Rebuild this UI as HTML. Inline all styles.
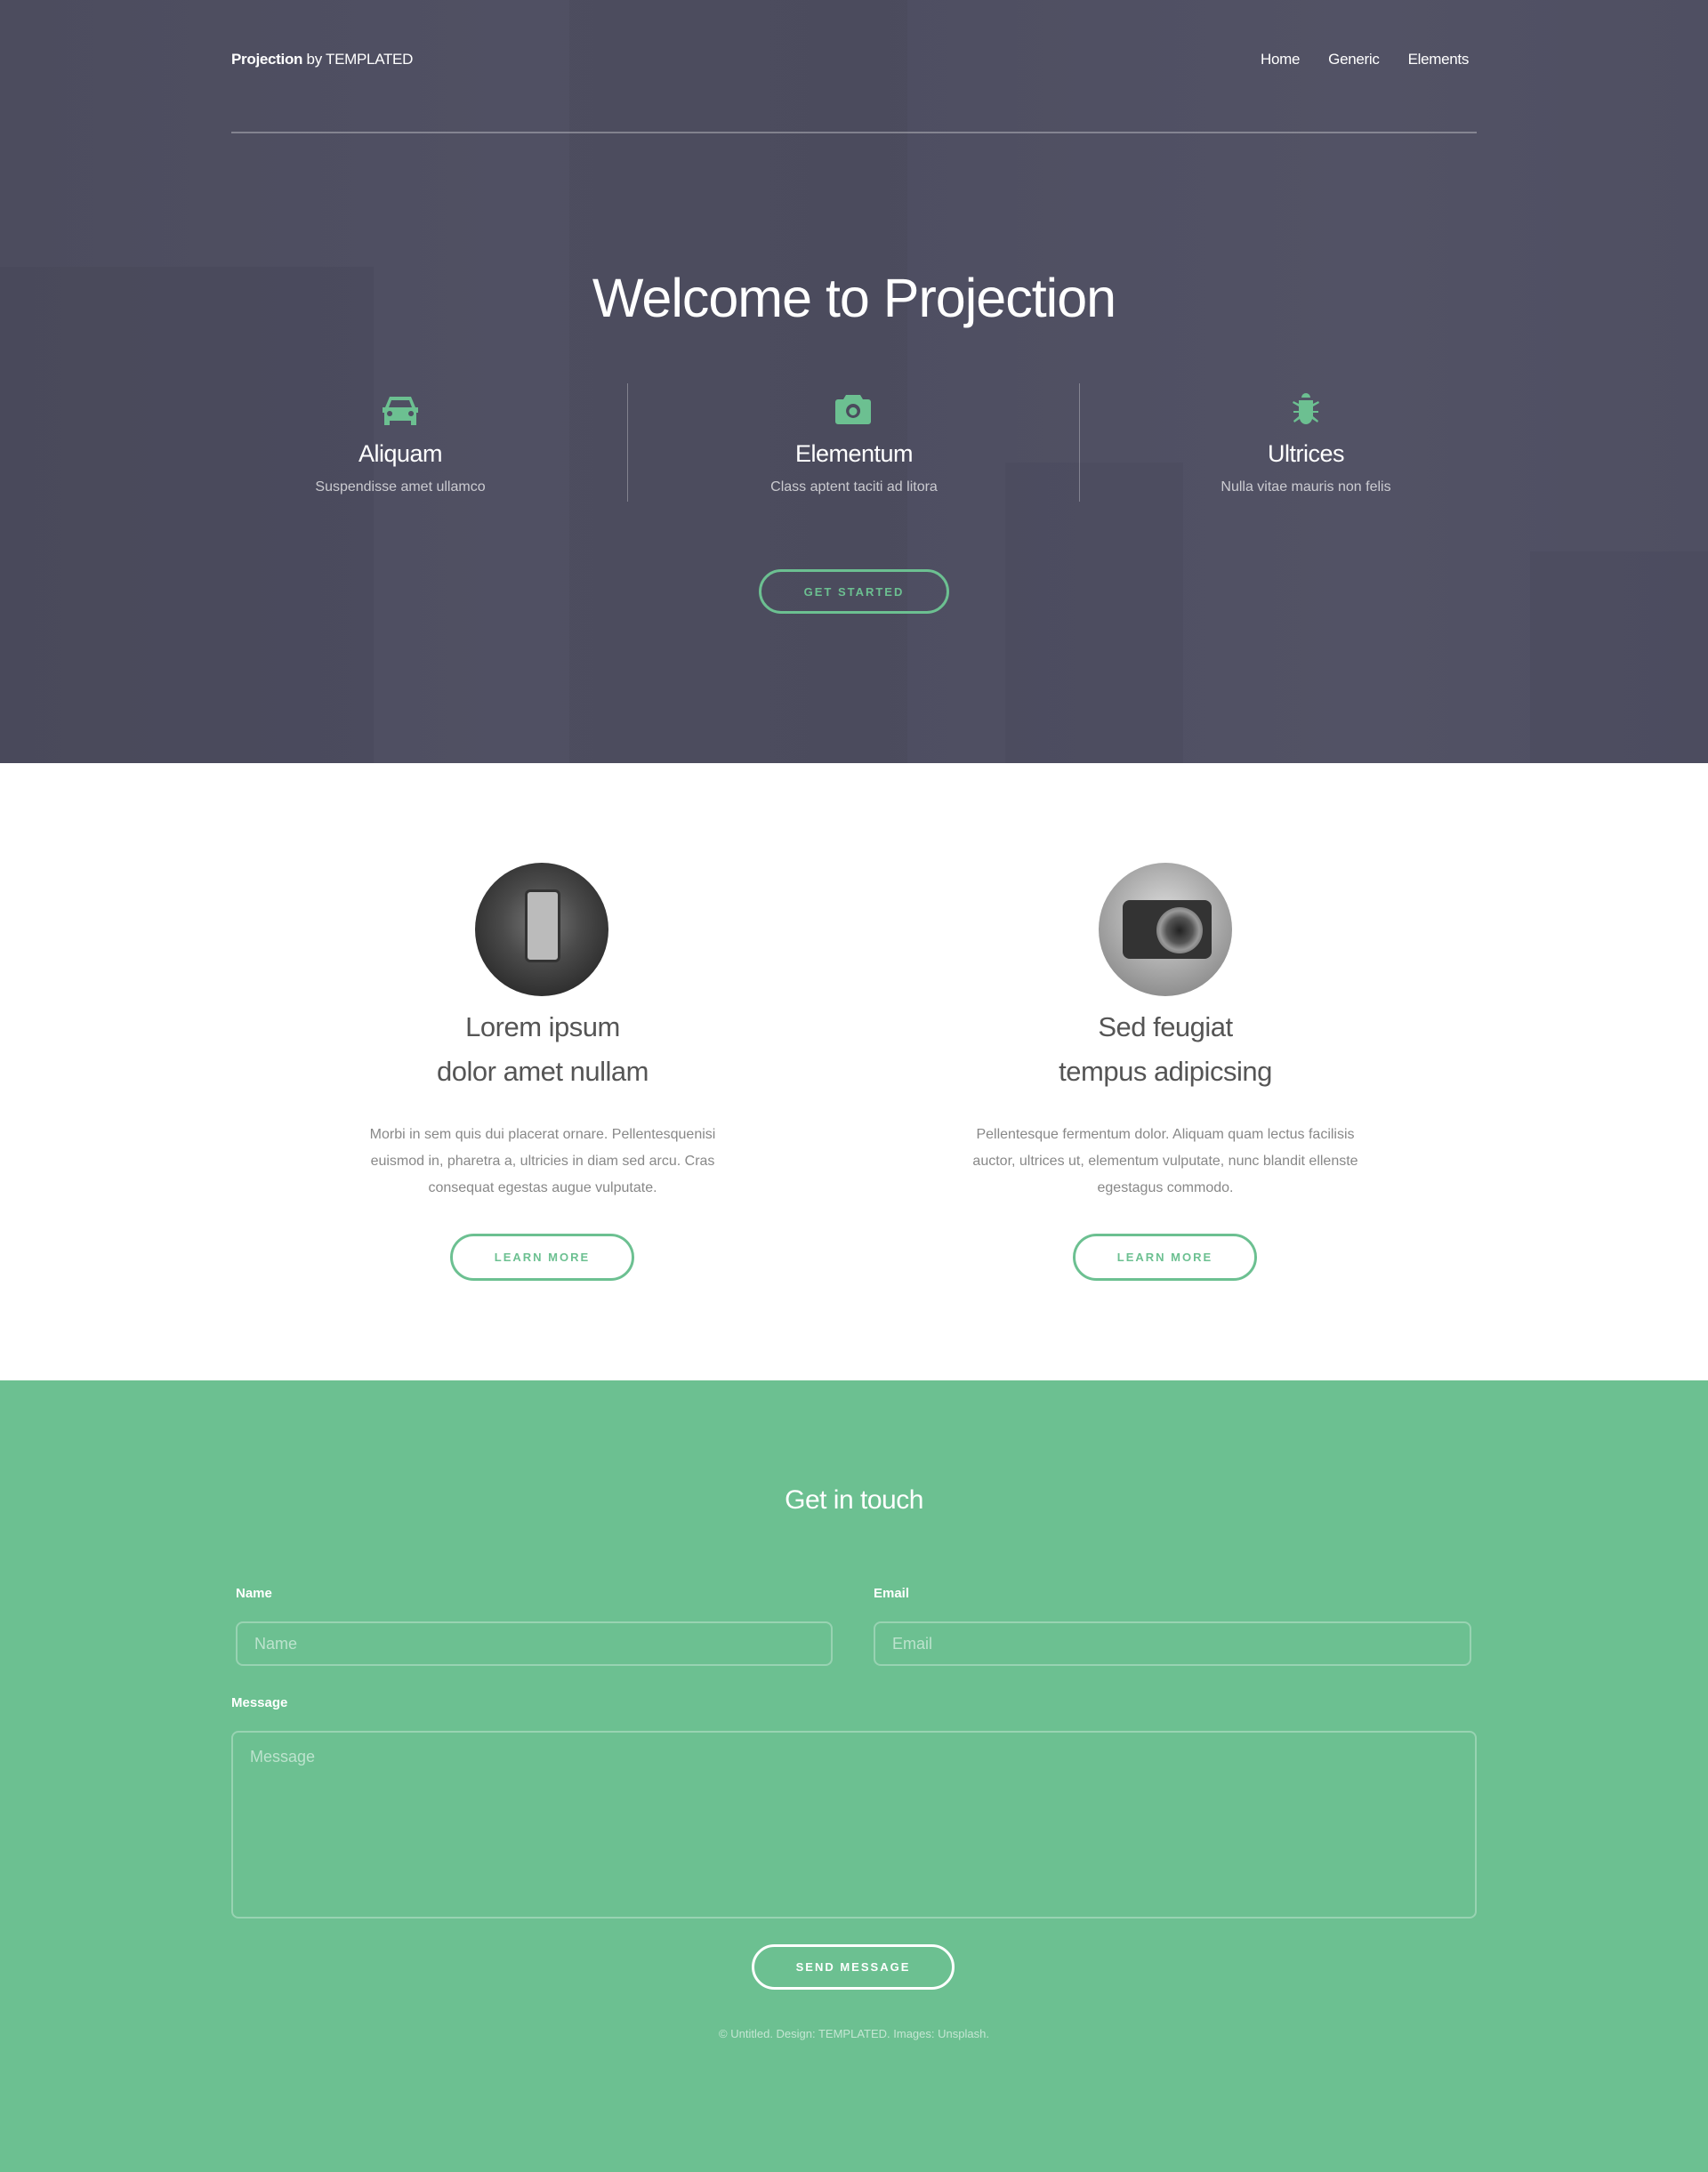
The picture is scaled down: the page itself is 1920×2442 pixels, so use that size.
<!DOCTYPE html>
<html><head><meta charset="utf-8"><style>
*{margin:0;padding:0;box-sizing:border-box}
body{width:1920px;height:2442px;position:relative;font-family:"Liberation Sans",sans-serif;background:#fff;overflow:hidden}
.a{position:absolute}
.c{text-align:center}
#hero{left:0;top:0;width:1920px;height:858px;background:linear-gradient(90deg,#4c4c5e 0%,#505063 30%,#4e4e61 50%,#525265 80%,#4f4f62 100%)}
.bld{position:absolute}
.btn{position:absolute;border:3px solid #6cc091;border-radius:30px;color:#6cc091;font-size:13px;letter-spacing:2px;font-weight:bold;display:flex;align-items:center;justify-content:center}
.inp{position:absolute;border:2px solid rgba(255,255,255,.3);border-radius:8px;color:rgba(255,255,255,.55);font-size:18px;padding-left:19px;display:flex;align-items:center}
.lbl{position:absolute;color:#fff;font-weight:bold;font-size:15px}
</style></head><body>
<div id="hero" class="a">
 <div class="bld" style="left:0;top:300px;width:420px;height:558px;background:rgba(60,60,75,.18)"></div>
 <div class="bld" style="left:640px;top:0;width:380px;height:858px;background:rgba(60,60,76,.15)"></div>
 <div class="bld" style="left:1130px;top:520px;width:200px;height:338px;background:rgba(62,62,78,.15)"></div>
 <div class="bld" style="left:1720px;top:620px;width:200px;height:238px;background:rgba(62,62,78,.15)"></div>
</div>
<div class="a" style="left:260px;top:57px;color:#fff;font-size:17px;letter-spacing:-0.3px"><b>Projection</b> by TEMPLATED</div>
<div class="a" style="left:1417px;top:57px;color:#fff;font-size:17px;letter-spacing:-0.3px">Home<span style="margin-left:32px">Generic</span><span style="margin-left:32px">Elements</span></div>
<div class="a" style="left:260px;top:148px;width:1400px;height:2px;background:rgba(255,255,255,.3)"></div>
<div class="a c" style="left:0;top:300px;width:1920px;color:#fff;font-size:61px;letter-spacing:-1px">Welcome to Projection</div>
<div class="a" style="left:705px;top:431px;width:1px;height:133px;background:rgba(255,255,255,.3)"></div>
<div class="a" style="left:1213px;top:431px;width:1px;height:133px;background:rgba(255,255,255,.3)"></div>
<svg class="a" style="left:428px;top:444px" width="44" height="36" viewBox="0 0 44 36"><path fill="#6cc091" d="M10 2h24l5 12h3v6h-2v14h-6v-5H10v5H4V20H2v-6h3zM12 6l-3 8h26l-3-8zM10 18a3 3 0 1 0 0.1 0zM34 18a3 3 0 1 0 0.1 0z"/></svg>
<svg class="a" style="left:938px;top:442px" width="42" height="36" viewBox="0 0 42 36"><path fill="#6cc091" fill-rule="evenodd" d="M13 2h16l3 5h6a3 3 0 0 1 3 3v22a3 3 0 0 1-3 3H4a3 3 0 0 1-3-3V10a3 3 0 0 1 3-3h6zM21 12a8 8 0 1 0 0.1 0zM21 16a4.5 4.5 0 1 1-0.1 0z"/></svg>
<svg class="a" style="left:1451px;top:441px" width="34" height="38" viewBox="0 0 34 38"><path fill="#6cc091" d="M12 6a5 5 0 0 1 10 0zM9 9h16v4l6-3 1 2-7 4v5h6v2h-6v4l6 5-1 2-6-4c-1 4-4 6-7 6s-6-2-7-6l-6 4-1-2 6-5v-4H3v-2h6v-5L2 12l1-2 6 3z"/></svg>
<div class="a c" style="left:300px;top:495px;width:300px;color:#fff;font-size:27px;letter-spacing:-0.5px">Aliquam</div>
<div class="a c" style="left:300px;top:539px;width:300px;color:rgba(255,255,255,.7);font-size:16px">Suspendisse amet ullamco</div>
<div class="a c" style="left:810px;top:495px;width:300px;color:#fff;font-size:27px;letter-spacing:-0.5px">Elementum</div>
<div class="a c" style="left:810px;top:539px;width:300px;color:rgba(255,255,255,.7);font-size:16px">Class aptent taciti ad litora</div>
<div class="a c" style="left:1318px;top:495px;width:300px;color:#fff;font-size:27px;letter-spacing:-0.5px">Ultrices</div>
<div class="a c" style="left:1318px;top:539px;width:300px;color:rgba(255,255,255,.7);font-size:16px">Nulla vitae mauris non felis</div>
<div class="btn" style="left:853px;top:640px;width:214px;height:50px">GET STARTED</div>

<div class="a" style="left:534px;top:970px;width:150px;height:150px;border-radius:50%;background:radial-gradient(circle at 50% 45%,#777 0,#4a4a4a 40%,#2a2a2a 80%)"></div>
<div class="a" style="left:590px;top:1000px;width:40px;height:82px;border-radius:6px;background:#bbb;border:3px solid #333"></div>
<div class="a" style="left:1235px;top:970px;width:150px;height:150px;border-radius:50%;background:radial-gradient(circle at 50% 40%,#ddd 0,#aaa 50%,#777 100%)"></div>
<div class="a" style="left:1262px;top:1012px;width:100px;height:66px;border-radius:8px;background:#333"></div>
<div class="a" style="left:1300px;top:1020px;width:52px;height:52px;border-radius:50%;background:radial-gradient(circle,#222 0,#555 40%,#999 60%,#444 100%)"></div>
<div class="a c" style="left:310px;top:1130px;width:600px;color:#555;font-size:31px;line-height:50px;letter-spacing:-0.5px">Lorem ipsum<br>dolor amet nullam</div>
<div class="a c" style="left:1010px;top:1130px;width:600px;color:#555;font-size:31px;line-height:50px;letter-spacing:-0.5px">Sed feugiat<br>tempus adipicsing</div>
<div class="a c" style="left:385px;top:1261px;width:450px;color:#888;font-size:16px;line-height:30px">Morbi in sem quis dui placerat ornare. Pellentesquenisi euismod in, pharetra a, ultricies in diam sed arcu. Cras consequat egestas augue vulputate.</div>
<div class="a c" style="left:1085px;top:1261px;width:450px;color:#888;font-size:16px;line-height:30px">Pellentesque fermentum dolor. Aliquam quam lectus facilisis auctor, ultrices ut, elementum vulputate, nunc blandit ellenste egestagus commodo.</div>
<div class="btn" style="left:506px;top:1387px;width:207px;height:53px">LEARN MORE</div>
<div class="btn" style="left:1206px;top:1387px;width:207px;height:53px">LEARN MORE</div>

<div class="a" style="left:0;top:1552px;width:1920px;height:890px;background:#6cc091"></div>
<div class="a c" style="left:0;top:1670px;width:1920px;color:#fff;font-size:30px;letter-spacing:-0.5px">Get in touch</div>
<div class="lbl" style="left:265px;top:1783px">Name</div>
<div class="lbl" style="left:982px;top:1783px">Email</div>
<div class="inp" style="left:265px;top:1823px;width:671px;height:50px">Name</div>
<div class="inp" style="left:982px;top:1823px;width:672px;height:50px">Email</div>
<div class="lbl" style="left:260px;top:1906px">Message</div>
<div class="inp" style="left:260px;top:1946px;width:1400px;height:211px;align-items:flex-start;padding-top:17px">Message</div>
<div class="btn" style="left:845px;top:2186px;width:228px;height:51px;border-color:#fff;color:#fff">SEND MESSAGE</div>
<div class="a c" style="left:0;top:2279px;width:1920px;color:rgba(255,255,255,.6);font-size:13px">© Untitled. Design: TEMPLATED. Images: Unsplash.</div>
</body></html>
